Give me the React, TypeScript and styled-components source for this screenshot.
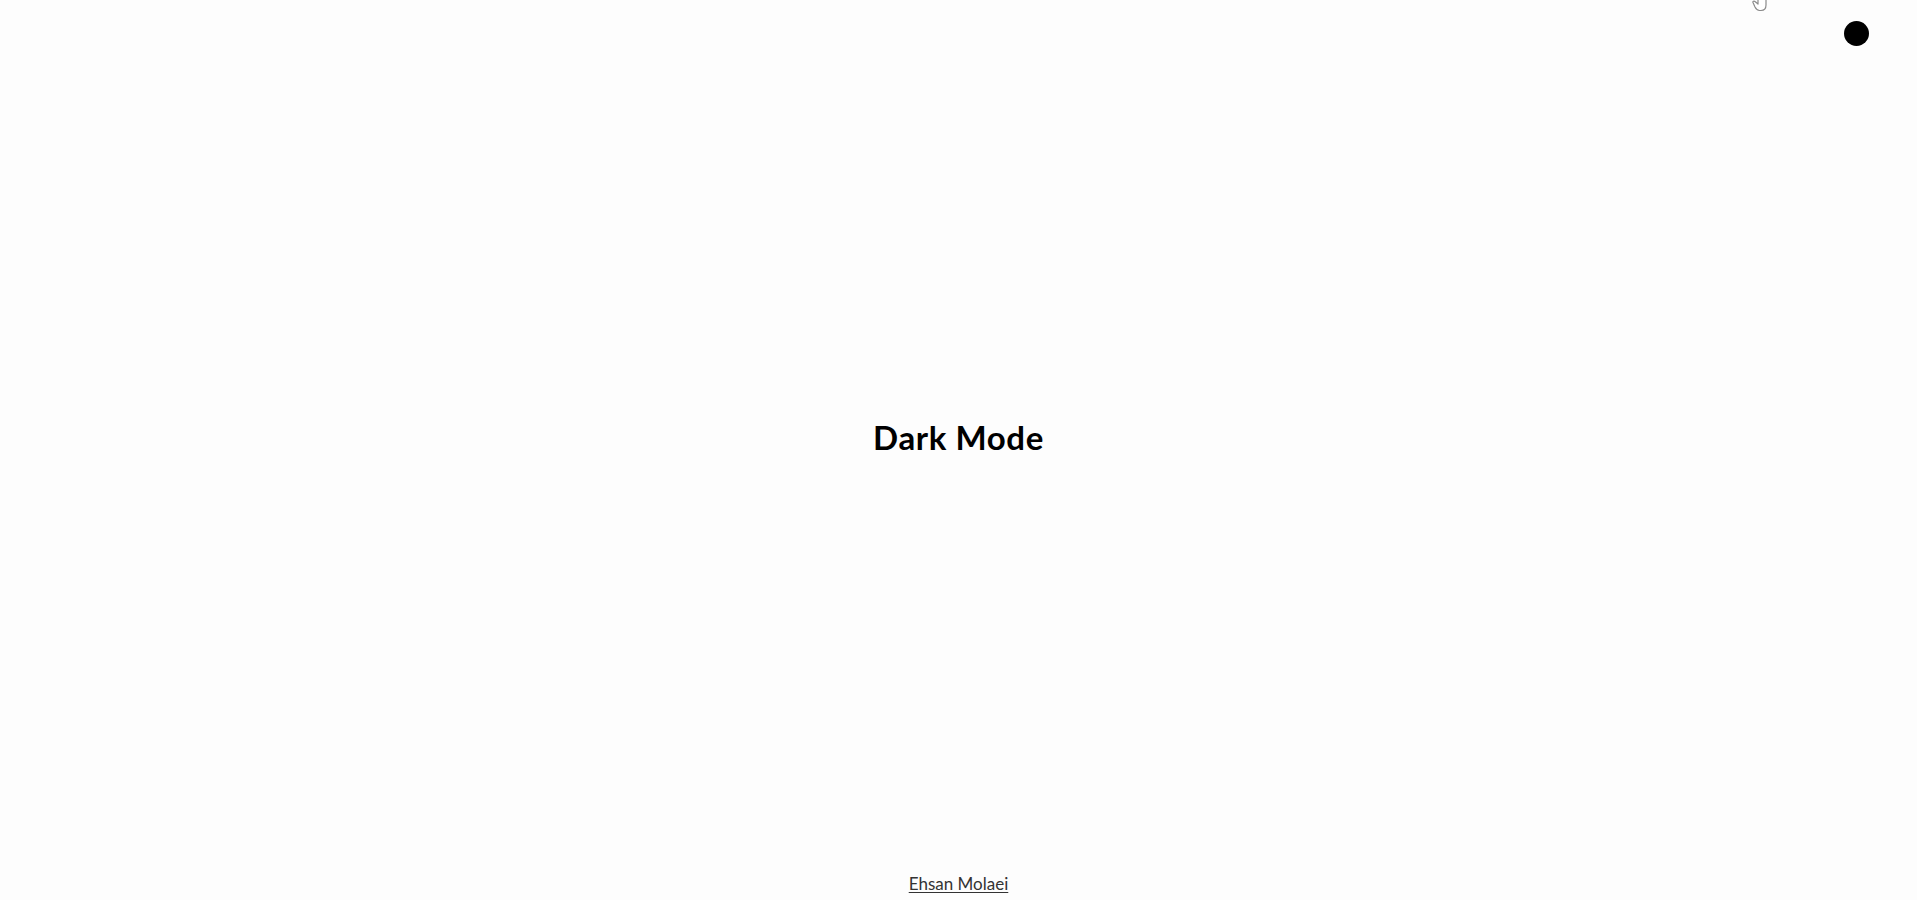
import React from 'react';
import styled, { createGlobalStyle } from 'styled-components';

const GlobalStyle = createGlobalStyle`
  html, body {
    margin: 0;
    padding: 0;
    background: #fdfdfd;
  }
  body {
    font-family: Lato, "Open Sans", sans-serif;
    color: #000;
  }
`;

const Page = styled.div`
  position: relative;
  display: flex;
  flex-direction: column;
  height: 900px;
  overflow: hidden;
`;

const Main = styled.main`
  flex: 1;
  display: flex;
  align-items: center;
  justify-content: center;
`;

const Title = styled.h1`
  margin: 0;
  font-size: 33px;
  font-weight: 700;
  letter-spacing: 0.6px;
`;

const Footer = styled.footer`
  display: flex;
  justify-content: center;
  padding-bottom: 6px;
`;

const AuthorLink = styled.a`
  color: #333;
  font-size: 17px;
  text-decoration: underline;
  text-underline-offset: 2px;
`;

const ToggleButton = styled.button`
  position: absolute;
  top: 21px;
  right: 48px;
  width: 25px;
  height: 25px;
  padding: 0;
  border: none;
  border-radius: 50%;
  background: #000;
  cursor: pointer;
`;

const Cursor = styled.svg`
  position: absolute;
  top: -12px;
  left: 1751px;
`;

const HandCursor: React.FC = () => (
  <Cursor width="20" height="24" viewBox="0 0 20 24">
    <path
      d="M7 2.5 C7 1.2 9 1.2 9 2.5 L9 10 L9 9 C9 7.8 11 7.8 11 9 L11 10.5 C11 9.3 13 9.3 13 10.5 L13 11.5 C13 10.3 15 10.3 15 11.5 L15 17 C15 20 13.5 22.5 10 22.5 L8.5 22.5 C6 22.5 5 21 4 19 L2 14.5 C1.5 13.3 3 12.5 4 13.5 L7 16 Z"
      fill="#fff"
      stroke="#8a8a8a"
      strokeWidth="1.2"
      strokeLinejoin="round"
    />
  </Cursor>
);

const App: React.FC = () => (
  <Page>
    <GlobalStyle />
    <HandCursor />
    <ToggleButton type="button" aria-label="toggle dark mode" />
    <Main>
      <Title>Dark Mode</Title>
    </Main>
    <Footer>
      <AuthorLink href="#">Ehsan Molaei</AuthorLink>
    </Footer>
  </Page>
);

export default App;
